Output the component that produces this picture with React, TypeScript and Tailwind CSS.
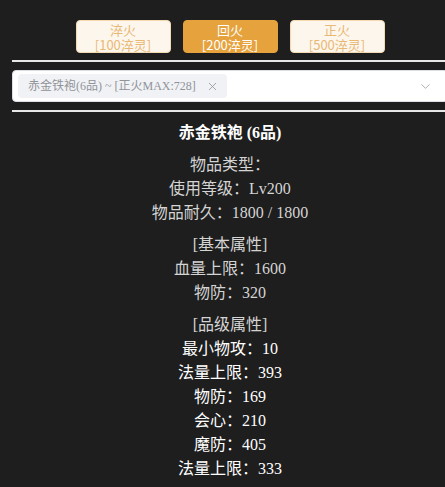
import { ChevronDown, X } from "lucide-react";

const serif = { fontFamily: '"Liberation Serif", "Noto Sans CJK SC", serif' };

const buttons = [
  { name: "淬火", cost: "[100淬灵]", active: false },
  { name: "回火", cost: "[200淬灵]", active: true },
  { name: "正火", cost: "[500淬灵]", active: false },
];

const baseInfo = ["物品类型：", "使用等级：Lv200", "物品耐久：1800 / 1800"];
const basicAttrs = ["血量上限：1600", "物防：320"];
const gradeAttrs = [
  "最小物攻：10",
  "法量上限：393",
  "物防：169",
  "会心：210",
  "魔防：405",
  "法量上限：333",
];

const App = () => {
  return (
    <div className="min-h-screen w-full overflow-hidden bg-[#1e1e1e]">
      <div className="ml-3 w-[436px] pt-5">
        <div className="flex justify-center gap-3">
          {buttons.map((b) => (
            <button
              key={b.name}
              className={
                b.active
                  ? "flex h-[33px] w-[95px] flex-col items-center justify-center rounded border border-[#e6a23c] bg-[#e6a23c] text-[13px] leading-[15px] text-white"
                  : "flex h-[33px] w-[95px] flex-col items-center justify-center rounded border border-[#f5dab1] bg-[#fdf6ec] text-[13px] leading-[15px] text-[#e9b875]"
              }
              style={{ fontFamily: '"Noto Sans CJK SC", sans-serif' }}
            >
              <span>{b.name}</span>
              <span>{b.cost}</span>
            </button>
          ))}
        </div>

        <div className="mt-[7px] h-[2px] bg-[#e8e8e8]" />

        <div className="mt-2 flex h-8 items-center rounded border border-[#dcdfe6] bg-white pl-[5px] pr-3">
          <div
            className="flex h-6 items-center gap-1 rounded bg-[#f0f2f5] pl-[10px] pr-2 text-xs text-[#909399]"
            style={serif}
          >
            <span>赤金铁袍(6品) ~ [正火MAX:728]</span>
            <X size={13} strokeWidth={1.5} className="ml-[6px] text-[#909399]" />
          </div>
          <div className="flex-1" />
          <ChevronDown size={15} strokeWidth={1.5} className="mr-[2px] text-[#a8abb2]" />
        </div>

        <div className="mt-2 h-[2px] bg-[#e8e8e8]" />

        <div className="mt-[9px] flex flex-col items-center text-base leading-6" style={serif}>
          <div className="font-bold text-white">赤金铁袍 (6品)</div>

          <div className="mt-2 flex flex-col items-center text-[#d4d4d4]">
            {baseInfo.map((t) => (
              <div key={t}>{t}</div>
            ))}
          </div>

          <div className="mt-2 flex flex-col items-center text-[#d4d4d4]">
            <div>[基本属性]</div>
            {basicAttrs.map((t) => (
              <div key={t}>{t}</div>
            ))}
          </div>

          <div className="mt-2 flex flex-col items-center">
            <div className="text-[#d4d4d4]">[品级属性]</div>
            {gradeAttrs.map((t, i) => (
              <div key={i} className="text-white">
                {t}
              </div>
            ))}
          </div>
        </div>
      </div>
    </div>
  );
};

export default App;
